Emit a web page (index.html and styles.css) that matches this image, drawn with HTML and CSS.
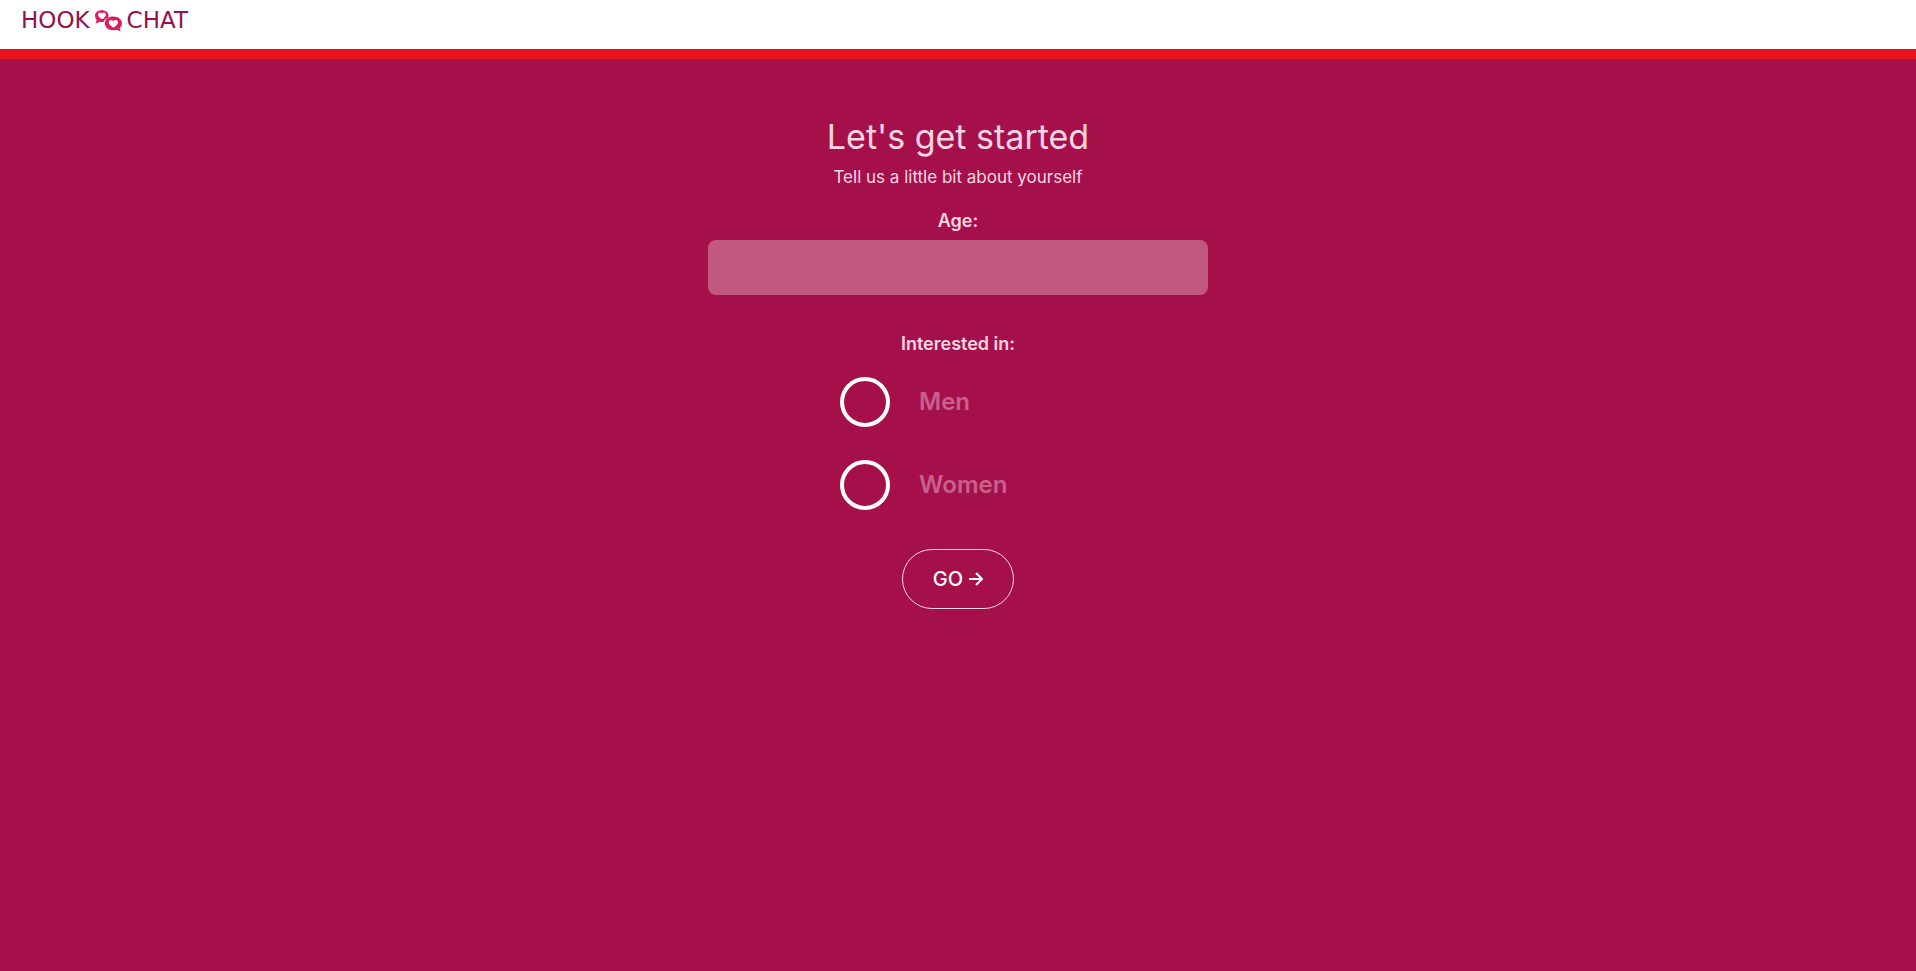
FILE: index.html
```html
<!DOCTYPE html>
<html lang="en">
<head>
<meta charset="utf-8">
<meta name="viewport" content="width=device-width, initial-scale=1">
<title>Hook Chat</title>
<link rel="stylesheet" href="styles.css">
</head>
<body>
<header class="header">
  <a class="logo" href="#" aria-label="Hook Chat">
    <span>HOOK</span>
    <svg class="logo-icon" viewBox="0 0 28 22" aria-hidden="true">
      <path class="bubble" fill-rule="evenodd" d="M7.500 1C11.500 1 14 3.200 14 6.200c0 1-.3 1.800-.8 2.500-1.900.6-3.300 1.900-3.800 3.500-1.200.3-2.700.3-3.900 0L1.600 13.800l1-3.500C1.600 9.200 1 7.900 1 6.300 1 3.200 3.600 1 7.500 1zM7.700 9.900C10 8.300 11.500 6.800 11.500 5.200c0-2.100-2.600-2.700-3.800-.9C6.500 2.500 3.900 3.100 3.900 5.200c0 1.600 1.500 3.100 3.800 4.700z"/>
      <path class="bubble" fill-rule="evenodd" d="M18.700 7.200c4.700 0 8.300 2.800 8.300 6.400 0 1.900-.8 3.500-2.200 4.600l.8 3.300-3.700-1.600c-1 .3-2.100.4-3.200.4-4.700 0-8.200-2.900-8.200-6.700s3.500-6.400 8.200-6.400zM18.700 17.900c2.900-1.900 4.500-3.500 4.500-5.300 0-2.300-3.100-3-4.500-1-1.400-2-4.500-1.300-4.500 1 0 1.800 1.600 3.400 4.500 5.300z"/>
    </svg>
    <span>CHAT</span>
  </a>
</header>
<main class="main">
  <form class="form">
    <h1 class="title">Let's get started</h1>
    <p class="subtitle">Tell us a little bit about yourself</p>
    <label class="label" for="age">Age:</label>
    <input class="age" id="age" name="age" type="text" inputmode="numeric">
    <fieldset class="choices">
      <legend class="label">Interested in:</legend>
      <label class="choice"><input class="radio" type="radio" name="interest" value="men"><span>Men</span></label>
      <label class="choice"><input class="radio" type="radio" name="interest" value="women"><span>Women</span></label>
    </fieldset>
    <button class="go" type="button">GO
      <svg class="arrow" viewBox="0 0 14 14" aria-hidden="true"><path d="M0 7h12M7 1l6 6-6 6"/></svg>
    </button>
  </form>
</main>
</body>
</html>
```
FILE: styles.css
```css
* { box-sizing: border-box; }
body {
  margin: 0;
  min-height: 100vh;
  background: #a5104b;
  color: #fbd5e2;
  font-family: Inter, "Liberation Sans", sans-serif;
}
.header {
  height: 59px;
  padding: 4px 21px;
  background: #fff;
  border-bottom: 10px solid #e9131a;
}
.logo {
  display: inline-flex;
  align-items: center;
  gap: 4px;
  color: #970f50;
  font: 23px/32px "DejaVu Sans", sans-serif;
  text-decoration: none;
}
.logo-icon { width: 29px; height: 23px; }
.bubble { fill: #e0195b; }
.main { padding: 56px 16px; }
.form {
  display: flex;
  flex-direction: column;
  align-items: center;
  width: 100%;
  max-width: 500px;
  margin: 0 auto;
}
.title { margin: 0; font-size: 34px; line-height: 44px; font-weight: 400; }
.subtitle { margin: 6px 0 0; font-size: 17px; line-height: 24px; }
.label { padding: 0; font-size: 18px; line-height: 24px; font-weight: 600; }
.form > .label { margin: 20px 0 7px; }
.age {
  width: 100%;
  height: 55px;
  padding: 8px 16px;
  border: 0;
  border-radius: 8px;
  background: #c25780;
  color: #fff;
  font: inherit;
  font-size: 20px;
}
.choices {
  display: flex;
  flex-direction: column;
  gap: 33px;
  width: 236px;
  margin: 37px 0 0;
  padding: 0;
  border: 0;
}
.choices .label { margin: 0 auto 21px; }
.choice {
  display: flex;
  align-items: center;
  gap: 29px;
  color: #c9608c;
  font-size: 24px;
  line-height: 30px;
  font-weight: 600;
}
.radio {
  appearance: none;
  width: 50px;
  height: 50px;
  margin: 0;
  border: 4px solid #fff;
  border-radius: 50%;
}
.radio:checked { background: #c25780; }
.go {
  display: flex;
  align-items: center;
  justify-content: center;
  gap: 6px;
  width: 112px;
  height: 60px;
  margin-top: 39px;
  padding: 0;
  border: 1px solid #fbd5e2;
  border-radius: 30px;
  background: transparent;
  color: #fff;
  font: 500 20px/24px Inter, sans-serif;
}
.arrow { width: 14px; height: 14px; fill: none; stroke: #fff; stroke-width: 2; }
```
